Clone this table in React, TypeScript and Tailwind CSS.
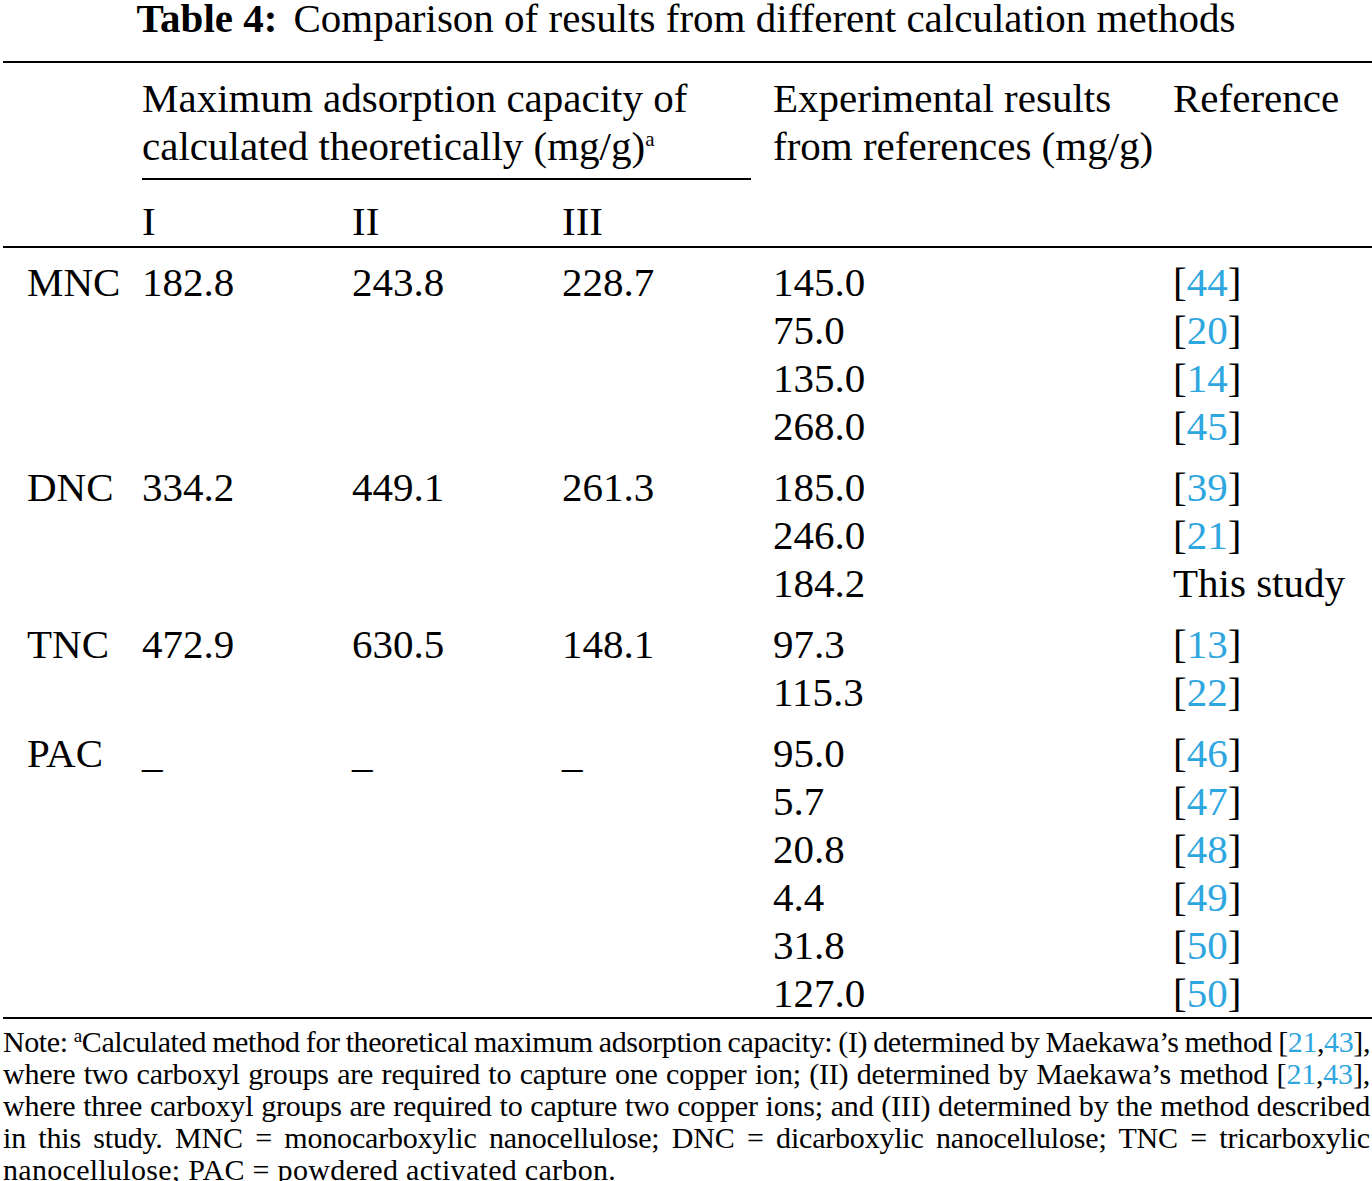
import React from 'react';

/* Table 4 — comparison of adsorption capacity results */

type Group = {
  name: string;
  calc: [string, string, string];
  rows: { exp: string; ref: string | null }[];
};

const groups: Group[] = [
  {
    name: 'MNC',
    calc: ['182.8', '243.8', '228.7'],
    rows: [
      { exp: '145.0', ref: '44' },
      { exp: '75.0', ref: '20' },
      { exp: '135.0', ref: '14' },
      { exp: '268.0', ref: '45' },
    ],
  },
  {
    name: 'DNC',
    calc: ['334.2', '449.1', '261.3'],
    rows: [
      { exp: '185.0', ref: '39' },
      { exp: '246.0', ref: '21' },
      { exp: '184.2', ref: null },
    ],
  },
  {
    name: 'TNC',
    calc: ['472.9', '630.5', '148.1'],
    rows: [
      { exp: '97.3', ref: '13' },
      { exp: '115.3', ref: '22' },
    ],
  },
  {
    name: 'PAC',
    calc: ['_', '_', '_'],
    rows: [
      { exp: '95.0', ref: '46' },
      { exp: '5.7', ref: '47' },
      { exp: '20.8', ref: '48' },
      { exp: '4.4', ref: '49' },
      { exp: '31.8', ref: '50' },
      { exp: '127.0', ref: '50' },
    ],
  },
];

const Blue: React.FC<{ children: React.ReactNode }> = ({ children }) => (
  <span className="text-[#2ea7e0]">{children}</span>
);

const Cite: React.FC<{ n: string }> = ({ n }) => (
  <span>
    [<Blue>{n}</Blue>]
  </span>
);

const cols = 'grid grid-cols-[115px_210px_210px_211px_400px_1fr]';

const GroupRows: React.FC<{ g: Group }> = ({ g }) => (
  <div className={`${cols} mt-[13px] first:mt-0`}>
    {g.rows.map((r, i) => (
      <React.Fragment key={i}>
        <div>{i === 0 ? g.name : ''}</div>
        {g.calc.map((c, j) => (
          <div key={j}>{i === 0 ? c : ''}</div>
        ))}
        <div>{r.exp}</div>
        <div className="whitespace-nowrap">{r.ref ? <Cite n={r.ref} /> : 'This study'}</div>
      </React.Fragment>
    ))}
  </div>
);

// footnote lines, broken where the original breaks them
const noteLines: { cls: string; body: React.ReactNode }[] = [
  {
    cls: 'tracking-[-0.4px]',
    body: (
      <>
        Note: <span className="relative -top-[10px] text-[19px] leading-none">a</span>Calculated method for theoretical
        maximum adsorption capacity: (I) determined by Maekawa’s method [<Blue>21</Blue>,<Blue>43</Blue>],
      </>
    ),
  },
  {
    cls: 'tracking-[-0.2px]',
    body: (
      <>
        where two carboxyl groups are required to capture one copper ion; (II) determined by Maekawa’s method [
        <Blue>21</Blue>,<Blue>43</Blue>],
      </>
    ),
  },
  {
    cls: 'tracking-[-0.2px]',
    body: <>where three carboxyl groups are required to capture two copper ions; and (III) determined by the method described</>,
  },
  {
    cls: 'tracking-[-0.2px]',
    body: <>in this study. MNC = monocarboxylic nanocellulose; DNC = dicarboxylic nanocellulose; TNC = tricarboxylic</>,
  },
];

export default function App() {
  return (
    <div className="w-[1372px] overflow-hidden bg-white text-black font-['Liberation_Serif',serif]">
      {/* caption */}
      <div className="h-[61px] text-center text-[41px] leading-[36px] whitespace-nowrap">
        <span className="font-bold">Table 4:</span>
        <span className="ml-[16px]">Comparison of results from different calculation methods</span>
      </div>

      <div className="ml-[3px] text-[41px] leading-[48px]">
        <div className="h-[2px] bg-black" />

        {/* header */}
        <div className={`${cols} pl-[24px] pt-[11px]`}>
          <div />
          <div className="col-span-3 pr-[22px]">
            <div className="whitespace-nowrap">Maximum adsorption capacity of</div>
            <div className="whitespace-nowrap">
              calculated theoretically (mg/g)
              <span className="relative -top-[14px] text-[21px] leading-none">a</span>
            </div>
            <div className="mt-[8px] h-[2px] bg-black" />
          </div>
          <div className="whitespace-nowrap">
            <div>Experimental results</div>
            <div>from references (mg/g)</div>
          </div>
          <div>Reference</div>
        </div>
        <div className={`${cols} pl-[24px] mt-[17px]`}>
          <div />
          <div>I</div>
          <div>II</div>
          <div>III</div>
        </div>
        <div className="mt-[1px] h-[2px] bg-black" />

        {/* body */}
        <div className="pl-[24px] pt-[10px]">
          {groups.map((g) => (
            <GroupRows key={g.name} g={g} />
          ))}
        </div>
        <div className="h-[2px] bg-black" />
      </div>

      {/* note */}
      <div className="mt-[7px] pl-[3px] pr-[2px] text-[30px] leading-[32px] [word-spacing:-2px]">
        {noteLines.map((l, i) => (
          <div key={i} className={`whitespace-nowrap text-justify [text-align-last:justify] ${l.cls}`}>
            {l.body}
          </div>
        ))}
        <div className="tracking-[0.3px] [word-spacing:0px]">nanocellulose; PAC = powdered activated carbon.</div>
      </div>
    </div>
  );
}
